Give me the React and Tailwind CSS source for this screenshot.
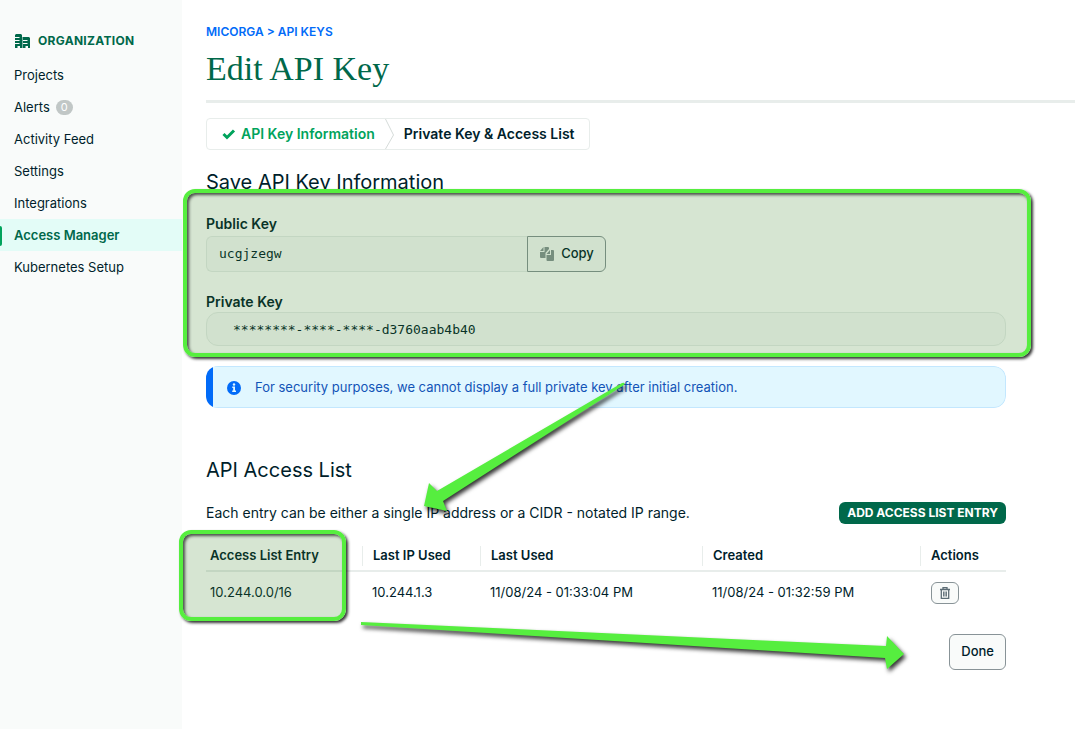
import React from "react";

const navItems = [
  { label: "Projects" },
  { label: "Alerts", badge: "0" },
  { label: "Activity Feed" },
  { label: "Settings" },
  { label: "Integrations" },
  { label: "Access Manager", active: true },
  { label: "Kubernetes Setup" },
];

function BuildingIcon() {
  return (
    <svg className="h-4 w-4 shrink-0" viewBox="0 0 16 16" fill="#00684a" aria-hidden="true">
      <path d="M1 2 2 1h5l1 1v13H6v-2H3.500v2H1z" />
      <path d="M8.500 4H15l1 1v10h-2v-2h-2.500v2h-3z" />
      <path d="M0 4.500h5.500M0 7.500h5.500M0 10.500h5.500M9 7.500h4.500M9 10.500h4.500" stroke="#f9fbfa" strokeWidth="1" />
    </svg>
  );
}

function CopyIcon() {
  return (
    <svg className="h-4 w-4 shrink-0" viewBox="0 0 16 16" fill="#889397" aria-hidden="true">
      <path d="M4.500 1v4H1z" />
      <path d="M5.500 1H9a1 1 0 0 1 1 1v1L6.500 7v5H2a1 1 0 0 1-1-1V6h4.500z" />
      <path d="M11 4v4H7.500z" />
      <path d="M12 4h2a1 1 0 0 1 1 1v9a1 1 0 0 1-1 1H8.500a1 1 0 0 1-1-1V9H12z" />
    </svg>
  );
}

function InfoIcon() {
  return (
    <svg className="h-4 w-4 shrink-0" viewBox="0 0 16 16" aria-hidden="true">
      <circle cx="8" cy="8" r="7" fill="#016bf8" />
      <circle cx="8" cy="4.500" r="1.200" fill="#e1f7ff" />
      <path d="M6.300 6.500h2.700v4h1v1.500H6.200v-1.500h1V8h-.9z" fill="#e1f7ff" />
    </svg>
  );
}

function TrashIcon() {
  return (
    <svg className="h-4 w-4" viewBox="0 0 16 16" fill="none" stroke="#5c6c75" strokeWidth="1.300" aria-hidden="true">
      <path d="M3 4.500h10M6 4V2.700h4V4M4.300 4.500v8.800h7.400V4.500" />
      <path d="M6.600 6.500v5M8 6.500v5M9.400 6.500v5" strokeWidth="1" />
    </svg>
  );
}

function Highlight({ className }) {
  return (
    <div
      aria-hidden="true"
      className={`pointer-events-none absolute z-10 rounded-xl border-4 border-[#56ee3f] bg-[#327d1e]/20 shadow-[2px_2px_3px_rgba(0,0,0,0.8),inset_2px_2px_3px_rgba(0,0,0,0.65)] ${className}`}
    />
  );
}

function Sidebar() {
  return (
    <nav className="w-[182px] shrink-0 bg-[#f9fbfa] pt-8" aria-label="Organization">
      <h2 className="mb-[9px] flex h-[18px] items-center gap-2 pl-3.5 text-xs font-bold tracking-wide text-[#00684a]">
        <BuildingIcon />
        ORGANIZATION
      </h2>
      <ul>
        {navItems.map((item) => (
          <li key={item.label}>
            <a
              href="#"
              aria-current={item.active ? "page" : undefined}
              className={
                item.active
                  ? "relative flex h-8 items-center bg-[#e3fcf7] pt-px pl-3.5 font-semibold text-[#00684a] before:absolute before:left-0 before:h-5 before:w-0.5 before:rounded-r before:bg-[#00a35c]"
                  : "flex h-8 items-center gap-1.5 pt-px pl-3.5"
              }
            >
              {item.label}
              {item.badge && (
                <span className="flex h-[15px] w-[17px] items-center justify-center rounded-full bg-[#c1c7c6] text-[11px] text-white">
                  {item.badge}
                </span>
              )}
            </a>
          </li>
        ))}
      </ul>
    </nav>
  );
}

function Steps() {
  return (
    <ol className="flex h-8 w-max items-stretch rounded border border-[#e8edeb] text-sm font-semibold">
      <li className="flex items-center pl-[15px] text-[#00a35c]">
        <svg className="mr-[5px] h-3.5 w-3.5" viewBox="0 0 14 14" fill="none" stroke="#00a35c" strokeWidth="3" aria-hidden="true">
          <path d="m1.500 7 3.500 3.500 7-7" />
        </svg>
        API Key Information
      </li>
      <li className="flex items-center pr-3.5">
        <svg className="mx-2.5 h-[30px] w-[9px]" viewBox="0 0 9 30" fill="none" stroke="#d5dbd9" aria-hidden="true">
          <path d="m.5 0 8 16-8 14" />
        </svg>
        Private Key &amp; Access List
      </li>
    </ol>
  );
}

function Keys() {
  return (
    <section className="relative">
      <h2 className="text-xl leading-7">Save API Key Information</h2>
      <div className="mt-[18px]">
        <label htmlFor="public-key" className="block text-sm leading-5 font-semibold">
          Public Key
        </label>
        <div className="mt-0.5 flex h-9 max-w-[400px]">
          <input
            id="public-key"
            readOnly
            value="ucgjzegw"
            className="min-w-0 flex-1 rounded-l-md border border-r-0 border-[#e8edeb] bg-[#f9fbfa] px-3 font-['DejaVu_Sans_Mono',monospace] text-[13px]"
          />
          <button
            type="button"
            className="flex w-[79px] items-center justify-center gap-1.5 rounded-r-md border border-[#889397] bg-[#f9fbfa] text-[13px] font-medium"
          >
            <CopyIcon />
            Copy
          </button>
        </div>
      </div>
      <div className="mt-5">
        <label htmlFor="private-key" className="block text-sm leading-5 font-semibold">
          Private Key
        </label>
        <input
          id="private-key"
          readOnly
          value="********-****-****-d3760aab4b40"
          className="block h-[34px] w-full rounded-xl border border-[#e8edeb] bg-[#f9fbfa] px-[26px] font-['DejaVu_Sans_Mono',monospace] text-[13px]"
        />
      </div>
      <Highlight className="top-[21px] -right-[25px] -bottom-[11px] -left-[23px]" />
    </section>
  );
}

function AccessList() {
  return (
    <section className="mt-12">
      <h2 className="text-xl leading-7">API Access List</h2>
      <div className="mt-[18px] flex items-center justify-between">
        <p className="text-sm leading-5">Each entry can be either a single IP address or a CIDR - notated IP range.</p>
        <button type="button" className="h-[22px] rounded-md bg-[#00684a] px-2 text-xs font-bold text-white">
          ADD ACCESS LIST ENTRY
        </button>
      </div>
      <div className="relative mt-[22px]">
        <table className="w-full table-fixed border-collapse text-left">
          <colgroup>
            <col className="w-[156px]" />
            <col className="w-[118px]" />
            <col className="w-[222px]" />
            <col className="w-[218px]" />
            <col />
          </colgroup>
          <thead className="border-b-2 border-[#e8edeb]">
            <tr className="h-[25px] align-top">
              {["Access List Entry", "Last IP Used", "Last Used", "Created", "Actions"].map((name, i) => (
                <th key={name} scope="col" className="p-0 font-semibold">
                  <span className={i ? "flex h-5 items-center border-l border-[#e8edeb] pl-2.5" : "flex h-5 items-center pl-1"}>
                    {name}
                  </span>
                </th>
              ))}
            </tr>
          </thead>
          <tbody>
            <tr className="h-[42px]">
              <td className="pl-1">10.244.0.0/16</td>
              <td className="pl-2.5">10.244.1.3</td>
              <td className="pl-2.5">11/08/24 - 01:33:04 PM</td>
              <td className="pl-2.5">11/08/24 - 01:32:59 PM</td>
              <td className="pl-[11px]">
                <button
                  type="button"
                  aria-label="Delete entry"
                  className="flex h-[22px] w-7 items-center justify-center rounded-md border border-[#889397] bg-[#f9fbfa]"
                >
                  <TrashIcon />
                </button>
              </td>
            </tr>
          </tbody>
        </table>
        <Highlight className="-top-4 -bottom-2 -left-[27px] w-[167px]" />
      </div>
      <div className="mt-[21px] flex justify-end">
        <button type="button" className="h-9 rounded-md border border-[#889397] bg-[#f9fbfa] px-[11px] text-[13px] font-medium">
          Done
        </button>
      </div>
    </section>
  );
}

export default function App() {
  return (
    <div className="relative flex min-h-screen bg-white font-['Inter',sans-serif] text-[13px] text-[#001e2b]">
      <Sidebar />
      <main className="min-w-0 flex-1 pt-6 pl-6">
        <p className="text-xs leading-4 font-semibold text-[#016bf8]">
          <a href="#">MICORGA</a> &gt; <a href="#">API KEYS</a>
        </p>
        <h1 className="mt-2 border-b-[3px] border-[#e8edeb] pb-2.5 font-['Liberation_Serif',serif] text-[34px] leading-[42px] text-[#00684a]">
          Edit API Key
        </h1>
        <div className="mt-[15px] max-w-[824px] pr-6">
          <Steps />
          <div className="mt-[18px]">
            <Keys />
          </div>
          <div className="mt-5 flex h-[42px] overflow-hidden rounded-xl text-[#1254b7]">
            <div className="w-[7px] bg-[#016bf8]" />
            <div className="flex flex-1 items-center gap-[13px] rounded-r-xl border border-l-0 border-[#c3e7fe] bg-[#e1f7ff] pt-0.5 pl-[13px]">
              <InfoIcon />
              <p>For security purposes, we cannot display a full private key after initial creation.</p>
            </div>
          </div>
          <AccessList />
        </div>
      </main>
      <svg
        className="pointer-events-none absolute top-0 left-0 z-20 h-[729px] w-[1075px] drop-shadow-[2px_3px_2px_rgba(0,0,0,0.8)]"
        viewBox="0 0 1075 729"
        fill="#56ee3f"
        aria-hidden="true"
      >
        <path d="M622 383 Q626 382 624 385 L443 501 447 511 424 506 429 483 437 491Z" />
        <path d="M361 622 L886 646 887 636 904 654 887 669 885 658 361 625Z" />
      </svg>
    </div>
  );
}
